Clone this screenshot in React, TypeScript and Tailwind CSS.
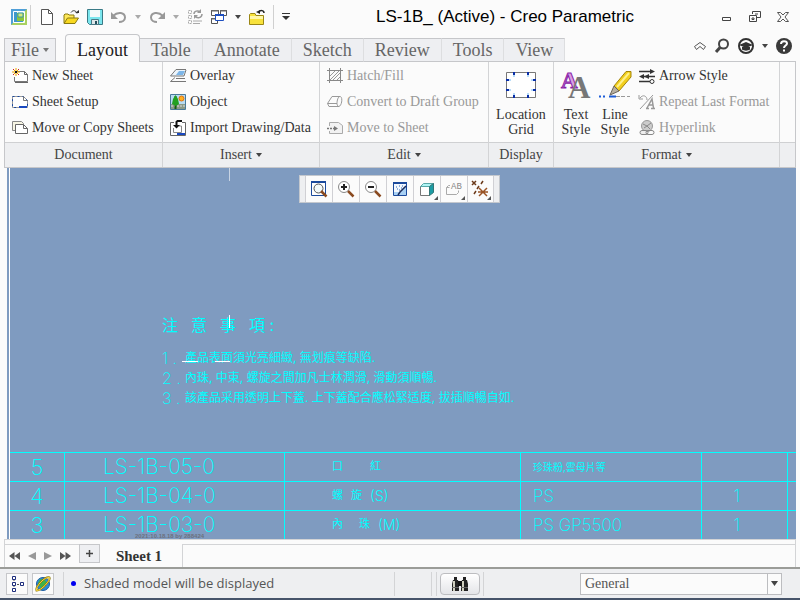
import type { ReactNode } from "react";
import clsx from "clsx";

const tabs = ["Layout", "Table", "Annotate", "Sketch", "Review", "Tools", "View"];

const notes = [
    "產品表面須光亮細緻, 無划痕等缺陷.",
    "內珠, 中束, 螺旋之間加凡士林潤滑, 滑動須順暢.",
    "該產品采用透明上下蓋. 上下蓋配合應松緊适度, 拔插順暢自如.",
];

const parts = [
    { no: "5", code: "LS-1B-05-0", name: ["口", "紅"], gap: "gap-[27px]", suffix: "", material: "珍珠粉,雲母片等", qty: "" },
    { no: "4", code: "LS-1B-04-0", name: ["螺", "旋"], gap: "gap-2", suffix: "(S)", material: "PS", qty: "1" },
    { no: "3", code: "LS-1B-03-0", name: ["內", "珠"], gap: "gap-4", suffix: "(M)", material: "PS GP5500", qty: "1" },
];

function Icon({ w = 16, h = 16, children }: { w?: number; h?: number; children: ReactNode }) {
    return (
        <svg width={w} height={h} viewBox={`0 0 ${w} ${h}`} fill="none" className="shrink-0 overflow-visible" aria-hidden="true">
            {children}
        </svg>
    );
}

function Caret({ color = "#444" }: { color?: string }) {
    return (
        <Icon w={6} h={4}>
            <path d="M0 0h6L3 4z" fill={color} />
        </Icon>
    );
}

/* Quick access icons */

const AppIcon = () => (
    <Icon>
        <path d="M0 0h16v16H0z" fill="#4f9fd8" />
        <path d="M0 16L16 0v16z" fill="#a8d060" />
        <path d="M2.500 2.500h11v11h-11z" fill="#d8f0e8" stroke="#fff" />
        <path d="M3 3h3v7h6v3H3z" fill="#3f97cc" />
        <path d="M6 4h7v8H6z" fill="#8cc63c" />
        <path d="M7 4h5v4H7z" fill="#d4ec7c" stroke="#3c96a8" />
    </Icon>
);

const NewIcon = () => (
    <Icon>
        <path d="M2.500.5h7l4 4v11h-11z" fill="#fff" stroke="#555" />
        <path d="M9.500.5v4h4" stroke="#555" />
    </Icon>
);

const OpenIcon = () => (
    <Icon>
        <path d="M1 14V6l1-1h3l1 1h5v3" fill="#ffe95a" stroke="#8a7a10" />
        <path d="M1 14.500L4.500 9h11L12 14.500z" fill="#f8d820" stroke="#8a7a10" />
        <path d="M8 3.500c2-3 5-2 6 1" stroke="#333" />
        <path d="M12 4h4v-3z" fill="#333" />
    </Icon>
);

const SaveIcon = () => (
    <Icon>
        <path d="M.5.5h15v15H2.500l-2-2z" fill="#7be6ee" stroke="#3a7a86" />
        <path d="M3 1h10v7H3z" fill="#f4fafa" />
        <path d="M4.500 10.500h7v5h-7z" fill="#e0e8ea" stroke="#4a7a86" />
        <path d="M8 12h2v3H8z" fill="#24505c" />
    </Icon>
);

const UndoIcon = () => (
    <Icon>
        <path d="M2 7C7 2 14 3.500 14 8.500c0 3-3 4.500-6 4.500" stroke="#999" strokeWidth="2" />
        <path d="M0 3v7h7z" fill="#999" />
    </Icon>
);

const RedoIcon = () => (
    <Icon>
        <path d="M14 7C9 2 2 3.500 2 8.500c0 3 3 4.500 6 4.500" stroke="#999" strokeWidth="2" />
        <path d="M16 3v7H9z" fill="#999" />
    </Icon>
);

const RegenerateIcon = () => (
    <Icon>
        <path d="M1.500 1.500h3v3h-3zM1.500 6.500h3v3h-3zM1.500 11.500h3v3h-3z" stroke="#aaa" strokeDasharray="2 1" />
        <path d="M6 12h9M6 14.500h7" stroke="#aaa" />
        <path d="M7 5c0-3 4-4 6-2M15 5c0 4-5 5-7 2" stroke="#999" strokeWidth="1.500" />
        <path d="M14 0v4h-4zM7 10V6h4z" fill="#999" />
    </Icon>
);

const WindowsIcon = () => (
    <Icon>
        <path d="M.5 1.500h7v5h-7zM9.500 1.500h6v5h-6zM.5 9.500h6v5h-6z" fill="#fff" stroke="#555" />
        <path d="M0 1h8v1.500H0zM9 1h7v1.500H9zM0 9h7v1.500H0z" fill="#666" />
        <path d="M4.500 5.500h8v6h-8z" fill="#fff" stroke="#1d4fc0" />
        <path d="M4 5h9v2H4z" fill="#1d4fc0" />
    </Icon>
);

const FolderIcon = () => (
    <Icon>
        <path d="M.5 15.500V5.500l1-1H6l1 2h7.500v9z" fill="#f8e23c" stroke="#9a8616" />
        <path d="M1 7h13v3H1z" fill="#fff7a8" />
        <path d="M15 4c0-3-4-3-5-1" stroke="#222" strokeWidth="1.500" />
        <path d="M7 3l4-2v4z" fill="#222" />
    </Icon>
);

/* Ribbon icons */

const NewSheetIcon = () => (
    <Icon>
        <path d="M5 3.500h7.500l3 3v7H2.500V9" fill="#fff" stroke="#777" />
        <path d="M12.500 3.500v3h3M3 14.500h13" stroke="#666" />
        <path d="M4 0v8M0 4h8M1 1l6 6M7 1L1 7" stroke="#f0a800" />
        <path d="M3 3h2v2H3z" fill="#111" />
        <path d="M1 1h1v1H1zM6 1h1v1H6zM1 6h1v1H1zM6 6h1v1H6z" fill="#d02020" />
    </Icon>
);

const SheetSetupIcon = () => (
    <Icon>
        <path d="M.5 2.500h11l4 4v7H.5z" fill="#fff" stroke="#999" />
        <path d="M.5 2.500h11l4 4v7H.5z" stroke="#1848a0" strokeDasharray="2 3" />
        <path d="M7 12h8v2H7z" fill="#1848c0" />
        <path d="M11.500 2.500v4h4" stroke="#777" />
    </Icon>
);

const CopySheetsIcon = () => (
    <Icon>
        <path d="M.5 1.500h9l2 2v7H.5z" fill="#f7f5e4" stroke="#888" />
        <path d="M3.500 4.500h8l4 4v5h-12z" fill="#fff" stroke="#666" />
        <path d="M11.500 4.500v4h4" stroke="#666" />
    </Icon>
);

const OverlayIcon = () => (
    <Icon>
        <path d="M6 1.500h10M6 1.500L.5 8H14l2-6" fill="#eef5fb" stroke="#777" />
        <path d="M9 3h6l-2 4H6z" fill="#7db6e8" />
        <path d="M5 9.500L.5 13.500H16M6 10.500h9" stroke="#777" />
    </Icon>
);

const ObjectIcon = () => (
    <Icon>
        <path d="M.5.5h15v15H.5z" fill="#b8dcf4" stroke="#4a7a9a" />
        <path d="M1 10h14v5H1z" fill="#8a9a88" />
        <path d="M1 12h14" stroke="#ddd" strokeDasharray="2 1" />
        <path d="M5.500 2v13" stroke="#145c14" strokeWidth="2" />
        <path d="M5.500 1L8 5l1 5-3 2-4-2 1-5z" fill="#22a022" />
        <circle cx="11.500" cy="4.500" r="2.500" fill="#ffb020" stroke="#e07010" />
    </Icon>
);

const ImportIcon = () => (
    <Icon>
        <path d="M4 2.500H.5v13h15v-13H12" fill="#fff" stroke="#666" />
        <path d="M3.500 8v4.500h8V6H9" stroke="#888" />
        <path d="M12 1H7.500L6.500 2v4" stroke="#111" strokeWidth="2" />
        <path d="M3 5h7L6.500 8.500z" fill="#111" />
        <path d="M7 13h8v2H7z" fill="#1848c0" />
    </Icon>
);

const HatchIcon = () => (
    <Icon>
        <path d="M0 2.500h16M0 12.500h16M2.500 0v15M13.500 0v15" stroke="#888" />
        <path d="M3 8l5-5M3 12l9-9M6 12l7-7M10 12l3-3" stroke="#999" />
    </Icon>
);

const ConvertIcon = () => (
    <Icon>
        <path d="M5 2.500h8c3 0 2 9-1 10H2L.5 9.500z" stroke="#999" />
        <path d="M.5 9.500H10c0-3 1-7 3-7M10 9.500c0 2 1 3 2 3" stroke="#999" />
    </Icon>
);

const MoveSheetIcon = () => (
    <Icon>
        <path d="M2.500 6V2.500h9l4 3v8h-13V11" fill="#f2f2f2" stroke="#aaa" />
        <path d="M0 8.500h8" stroke="#777" strokeDasharray="2 1" strokeWidth="1.500" />
        <path d="M7 6l4 2.500L7 11z" fill="#777" />
    </Icon>
);

const LocationGridIcon = () => (
    <Icon w={32} h={28}>
        <path d="M1.500 1.500h29v25h-29z" fill="#fff" stroke="#777" />
        <path
            d="M8 1h2v3H8zM22 1h2v3h-2zM8 24h2v3H8zM22 24h2v3h-2zM1 8h3v2H1zM1 18h3v2H1zM28 8h3v2h-3zM28 18h3v2h-3z"
            fill="#0a2ea8"
        />
        <path d="M4 8h2v2H4zM4 18h2v2H4zM26 8h2v2h-2zM26 18h2v2h-2zM8 4h2v2H8zM22 4h2v2h-2zM8 22h2v2H8zM22 22h2v2h-2z" fill="#b8dcf8" />
    </Icon>
);

const TextStyleIcon = () => (
    <Icon w={30} h={28}>
        <g fontFamily="Liberation Serif" fontWeight="bold">
            <text x="0" y="17" fontSize="23" fill="#d8a0e4" stroke="#8a1fa8">A</text>
            <text x="7" y="27" fontSize="31" fill="#777">A</text>
        </g>
    </Icon>
);

const LineStyleIcon = () => (
    <Icon w={32} h={28}>
        <path d="M0 25.500h2M4 25.500h2M10 25.500h7" stroke="#1c5cd8" strokeWidth="2" />
        <path d="M17 25.500h4M22 25.500h4M28 25.500h3" stroke="#999" />
        <path d="M15 15L27 .5h5V6L20 20z" fill="#f2cf1c" stroke="#a48408" />
        <path d="M18 16L30 2" stroke="#fff08a" strokeWidth="2" />
        <path d="M15 15l5 5-9 4z" fill="#b8b0a0" stroke="#6a6458" />
    </Icon>
);

const ArrowStyleIcon = () => (
    <Icon>
        <path d="M0 3.500h13M3 8.500h13M0 13.500h11" stroke="#333" strokeWidth="1.500" />
        <path d="M11 1l5 2.500L11 6zM0 8.500L5 6v5zM5 8.500L10 6v5z" fill="#333" />
        <circle cx="13" cy="13.500" r="2" fill="#fff" stroke="#333" />
    </Icon>
);

const RepeatIcon = () => (
    <Icon>
        <path d="M1 4c3-4 7-2 7 2M0 1v4h4M14 1L1 15" stroke="#999" />
        <path d="M7 14.500h3M12 14.500h4M8 14l5-9 1.500 9M10 11h4" stroke="#999" strokeWidth="1.500" />
    </Icon>
);

const HyperlinkIcon = () => (
    <Icon>
        <circle cx="8" cy="6" r="5.500" fill="#ccc" stroke="#999" />
        <path d="M4 4l4 2 4-3M5 8l3-2 3 3" stroke="#888" />
        <rect x="1" y="10.500" width="8" height="4" rx="2" fill="#eee" stroke="#888" />
        <rect x="7" y="10.500" width="8" height="4" rx="2" stroke="#888" />
    </Icon>
);

/* In-graphics toolbar icons */

const glassHandle = <path d="M11 11l5.500 5.500" stroke="#8a4a20" strokeWidth="2.500" />;

const RefitIcon = () => (
    <Icon w={18} h={18}>
        <path d="M1.500 1.500h14v14h-14z" fill="#fff" stroke="#1c4a9c" />
        <path d="M1 1h15v2H1z" fill="#1c4a9c" />
        <circle cx="8.500" cy="8.500" r="4.500" fill="#f4fafa" stroke="#555" />
        {glassHandle}
    </Icon>
);

const ZoomIcon = ({ plus = false }: { plus?: boolean }) => (
    <Icon w={18} h={18}>
        <circle cx="7" cy="7" r="5.500" fill="#fff" stroke="#888" />
        <path d={plus ? "M4 7h6M7 4v6" : "M4 7h6"} stroke="#222" strokeWidth="2" />
        {glassHandle}
    </Icon>
);

const RepaintIcon = () => (
    <Icon w={18} h={18}>
        <path d="M2.500 2.500h13v13h-13z" fill="#f4f9ff" stroke="#1c4a9c" />
        <path d="M2 2h14v2H2z" fill="#1c4a9c" />
        <path d="M3 15v-3l6 0 6-6v9z" fill="#a8d0f4" />
        <path d="M7 15l2-3 6-6" stroke="#1c2c5c" strokeWidth="1.500" />
        <path d="M5 7h1M8 6h1M6 9h1M10 8h1M8 10h1M11 6h1" stroke="#2c66b8" />
    </Icon>
);

const ShadingIcon = () => (
    <Icon w={18} h={18}>
        <path d="M2.500 6.500h9v9h-9z" fill="#fff" stroke="#777" />
        <path d="M2.500 6.500l3-3h10l-4 3z" fill="#aef4f4" stroke="#58a8a8" />
        <path d="M11.500 6.500l4-3v9l-4 3z" fill="#1c9ca4" stroke="#377" />
    </Icon>
);

const AnnotationIcon = () => (
    <Icon w={18} h={18}>
        <path d="M5 5.500H3.500l-2 2v7h10l2-2v-2M1.500 7.500h3" stroke="#aaa" />
        <text x="6" y="9" fontFamily="Liberation Mono" fontSize="9" fill="#888">AB</text>
    </Icon>
);

const DatumIcon = () => (
    <Icon w={18} h={18}>
        <path d="M1 1l4 4M5 1L1 5M12 1l-2 3M8 6l-2 3M5 11l-2 3" stroke="#6b3a1a" strokeWidth="1.500" />
        <path d="M8 8l8 8M16 8l-8 8M7 12h10" stroke="#9a5426" strokeWidth="1.500" />
    </Icon>
);

/* Pieces of the ribbon */

type CommandProps = { icon: ReactNode; label: string; disabled?: boolean };

function Command({ icon, label, disabled }: CommandProps) {
    return (
        <button
            type="button"
            disabled={disabled}
            className={clsx(
                "flex h-[26px] items-center gap-1 whitespace-nowrap text-left text-sm",
                disabled ? "text-[#999]" : "text-[#333]"
            )}
        >
            {icon}
            {label}
        </button>
    );
}

function BigCommand({ icon, top, bottom }: { icon: ReactNode; top: string; bottom: string }) {
    return (
        <button type="button" className="flex flex-col items-center gap-2 pt-2 text-sm leading-[15px] text-[#333]">
            {icon}
            <span>
                {top}
                <br />
                {bottom}
            </span>
        </button>
    );
}

type GroupProps = { title?: string; menu?: boolean; className?: string; children?: ReactNode };

function Group({ title, menu, className, children }: GroupProps) {
    return (
        <section className={clsx("flex flex-col border-r border-[#d3d4d6]", className)}>
            <div className="flex h-20 pt-px">{children}</div>
            <div className="flex h-[25px] items-center justify-center gap-1 border-t border-[#cfd0d2] bg-[#eeeff1] text-sm text-[#444]">
                {title}
                {menu && <Caret />}
            </div>
        </section>
    );
}

function QuickAccess() {
    return (
        <div className="flex items-center gap-2 pl-[11px]">
            <span className="border-r border-[#d0d0d0] py-1 pr-[3px]">
                <AppIcon />
            </span>
            <button type="button" aria-label="New"><NewIcon /></button>
            <button type="button" aria-label="Open"><OpenIcon /></button>
            <button type="button" aria-label="Save"><SaveIcon /></button>
            <button type="button" aria-label="Undo"><UndoIcon /></button>
            <button type="button" aria-label="Undo list"><Caret color="#aaa" /></button>
            <button type="button" aria-label="Redo"><RedoIcon /></button>
            <button type="button" aria-label="Redo list"><Caret color="#aaa" /></button>
            <button type="button" aria-label="Regenerate"><RegenerateIcon /></button>
            <button type="button" aria-label="Windows"><WindowsIcon /></button>
            <button type="button" aria-label="Window list"><Caret /></button>
            <button type="button" aria-label="Working directory"><FolderIcon /></button>
            <button type="button" aria-label="Customize" className="border-l border-[#d0d0d0] py-2 pl-2">
                <Icon w={8} h={8}>
                    <path d="M0 .5h8" stroke="#333" />
                    <path d="M0 3h8L4 7z" fill="#333" />
                </Icon>
            </button>
        </div>
    );
}

function TitleBar() {
    return (
        <header className="flex h-[34px] items-center">
            <QuickAccess />
            <h1 className="flex-1 text-center font-['Liberation_Sans'] text-[17px] text-black">
                LS-1B_ (Active) - Creo Parametric
            </h1>
            <div className="flex items-center gap-[14px] pr-[10px]">
                <button type="button" aria-label="Minimize">
                    <Icon w={14} h={14}><path d="M2.500 7.500h8v3h-8z" stroke="#444" /></Icon>
                </button>
                <button type="button" aria-label="Restore">
                    <Icon w={14} h={14}>
                        <path d="M4.500 4V1.500h8v6H9" stroke="#444" />
                        <path d="M1.500 5.500h7v6h-7zM4 8h2v1.500H4zM7 4h3" stroke="#444" />
                    </Icon>
                </button>
                <button type="button" aria-label="Close">
                    <Icon w={14} h={14}>
                        <path d="M1.500 2.500h3L7 5l2.500-2.500h3L9 7l3.500 4.500h-3L7 9l-2.500 2.500h-3L5 7z" stroke="#555" />
                    </Icon>
                </button>
            </div>
        </header>
    );
}

function TabBar() {
    return (
        <div className="relative z-10 -mb-px flex h-7 items-end pl-1">
            <button
                type="button"
                className="mr-[9px] flex h-6 items-center gap-1 border border-[#c6c7ca] bg-[#eeeff2] px-[6px] text-lg text-[#666]"
            >
                File
                <Caret color="#777" />
            </button>
            <nav className="flex items-end" role="tablist">
                {tabs.map((tab, i) => (
                    <button
                        key={tab}
                        type="button"
                        role="tab"
                        aria-selected={i === 0}
                        className={clsx(
                            "px-[11px] text-lg",
                            i === 0
                                ? "h-7 rounded-t-sm border border-b-0 border-[#c6c7ca] bg-[#fbfbfb] pt-0.5 leading-6 text-[#222]"
                                : "h-6 border-y border-r border-[#c6c7ca] border-r-[#dddee0] bg-[#eeeff2] leading-[22px] text-[#666]"
                        )}
                    >
                        {tab}
                    </button>
                ))}
            </nav>
            <div className="ml-auto flex h-full items-center gap-2 pr-2 pb-1">
                <button type="button" aria-label="Collapse ribbon">
                    <Icon w={12} h={8}>
                        <path d="M.5 4.500L6 .5l5.500 4M2.500 7.500L6 4.500l3.500 3M.5 4.500l2 3M11.500 4.500l-2 3" stroke="#555" />
                    </Icon>
                </button>
                <button type="button" aria-label="Search">
                    <Icon>
                        <circle cx="9.500" cy="6" r="4.500" stroke="#444" strokeWidth="2" />
                        <path d="M6 9.500L2 14" stroke="#444" strokeWidth="3" />
                    </Icon>
                </button>
                <button type="button" aria-label="Learning">
                    <Icon>
                        <circle cx="8" cy="8" r="7" fill="#fff" stroke="#333" strokeWidth="2" />
                        <path d="M1 7l7-3 7 3-7 3z" fill="#333" />
                        <path d="M4 9v2.500c2 1.500 6 1.500 8 0V9" fill="#333" />
                    </Icon>
                </button>
                <button type="button" aria-label="Learning list"><Caret /></button>
                <button type="button" aria-label="Help">
                    <Icon>
                        <circle cx="8" cy="8" r="8" fill="#3a3a3a" />
                        <path d="M5 6c0-4 6-3.500 6-.5C11 7.500 8 7.500 8 10M8 11.500v2" stroke="#fff" strokeWidth="2" />
                    </Icon>
                </button>
            </div>
        </div>
    );
}

function Ribbon() {
    return (
        <div className="mx-1 flex border border-[#c6c7ca] bg-[#fbfbfb]">
            <Group title="Document" className="w-[158px]">
                <div className="flex flex-col pl-[7px]">
                    <Command icon={<NewSheetIcon />} label="New Sheet" />
                    <Command icon={<SheetSetupIcon />} label="Sheet Setup" />
                    <Command icon={<CopySheetsIcon />} label="Move or Copy Sheets" />
                </div>
            </Group>
            <Group title="Insert" menu className="w-[157px]">
                <div className="flex flex-col pl-[7px]">
                    <Command icon={<OverlayIcon />} label="Overlay" />
                    <Command icon={<ObjectIcon />} label="Object" />
                    <Command icon={<ImportIcon />} label="Import Drawing/Data" />
                </div>
            </Group>
            <Group title="Edit" menu className="w-[169px]">
                <div className="flex flex-col pl-[7px]">
                    <Command icon={<HatchIcon />} label="Hatch/Fill" disabled />
                    <Command icon={<ConvertIcon />} label="Convert to Draft Group" disabled />
                    <Command icon={<MoveSheetIcon />} label="Move to Sheet" disabled />
                </div>
            </Group>
            <Group title="Display" className="w-[65px]">
                <div className="flex flex-1 justify-center">
                    <BigCommand icon={<LocationGridIcon />} top="Location" bottom="Grid" />
                </div>
            </Group>
            <Group title="Format" menu className="w-[226px]">
                <div className="flex gap-2 pl-[7px]">
                    <BigCommand icon={<TextStyleIcon />} top="Text" bottom="Style" />
                    <BigCommand icon={<LineStyleIcon />} top="Line" bottom="Style" />
                    <div className="flex flex-col">
                        <Command icon={<ArrowStyleIcon />} label="Arrow Style" />
                        <Command icon={<RepeatIcon />} label="Repeat Last Format" disabled />
                        <Command icon={<HyperlinkIcon />} label="Hyperlink" disabled />
                    </div>
                </div>
            </Group>
            <Group className="flex-1 border-r-0" />
        </div>
    );
}

const viewTools = [
    { label: "Refit", icon: <RefitIcon /> },
    { label: "Zoom in", icon: <ZoomIcon plus /> },
    { label: "Zoom out", icon: <ZoomIcon /> },
    { label: "Repaint", icon: <RepaintIcon /> },
    { label: "Display style", icon: <ShadingIcon />, menu: true },
    { label: "Annotation display", icon: <AnnotationIcon />, menu: true },
    { label: "Datum display", icon: <DatumIcon />, menu: true },
];

function ViewToolbar() {
    return (
        <div className="flex h-7 border border-[#c4c8ce] bg-[#eeeff1] px-[5px]">
            {viewTools.map((tool) => (
                <button
                    key={tool.label}
                    type="button"
                    aria-label={tool.label}
                    className="relative flex w-[27px] items-center justify-center border-l border-[#d0d0d4] bg-[#fbfbfb] last:border-r"
                >
                    {tool.icon}
                    {tool.menu && (
                        <span className="absolute right-0.5 bottom-0.5">
                            <Icon w={4} h={4}><path d="M4 0v4H0z" fill="#555" /></Icon>
                        </span>
                    )}
                </button>
            ))}
        </div>
    );
}

function PartsTable() {
    return (
        <table className="w-full table-fixed border-separate border-spacing-0 whitespace-nowrap">
            <colgroup>
                <col className="w-[7%]" />
                <col className="w-[28%]" />
                <col className="w-[30%]" />
                <col className="w-[23%]" />
                <col className="w-[11%]" />
                <col />
            </colgroup>
            <tbody>
                {parts.map((part) => (
                    <tr
                        key={part.no}
                        className="h-[29px] [&>td]:border-t [&>td]:border-r [&>td]:border-[#00ffff] [&>td]:p-0 [&>td]:leading-7 [&>td:last-child]:border-r-0"
                    >
                        <td className="text-center text-[22px]">{part.no}</td>
                        <td className="text-[21px]"><span className="pl-[38px]">{part.code}</span></td>
                        <td>
                            <div className="flex items-center gap-2 pl-[47px] text-sm font-light">
                                <span className={clsx("flex text-[11px] font-normal", part.gap)}>
                                    <span>{part.name[0]}</span>
                                    <span>{part.name[1]}</span>
                                </span>
                                {part.suffix}
                            </div>
                        </td>
                        <td className={/^[A-Z]/.test(part.material) ? "text-[17px]" : "text-[10px] font-normal"}>
                            <span className="pl-3">{part.material}</span>
                        </td>
                        <td className="text-[17px]"><span className="pl-8">{part.qty}</span></td>
                        <td />
                    </tr>
                ))}
            </tbody>
        </table>
    );
}

function DrawingArea() {
    return (
        <main className="mr-1 ml-[7px] flex min-h-0 flex-1 flex-col overflow-hidden bg-[#7f9bc0] pl-0.5">
            <div className="relative flex min-h-0 flex-1 flex-col border-l border-white font-['Inter','Noto_Sans_CJK_TC',sans-serif] font-extralight text-[#00ffff]">
                <div className="flex justify-center pt-[7px] pr-2">
                    <ViewToolbar />
                </div>
                {/* sheet frame and axis ticks */}
                <span className="absolute top-0 left-[219px] h-[13px] w-px bg-[#c8d4e4]" />
                <span className="absolute top-[147px] left-[219px] h-[13px] w-px bg-white" />
                <span className="absolute top-[193px] left-[172px] h-px w-4 bg-white" />
                <span className="absolute top-[193px] left-[205px] h-px w-[15px] bg-white" />

                <div className="mt-auto pb-11 pl-[152px]">
                    <h2 className="flex gap-[13px] text-base leading-6 font-normal">
                        <span>注</span>
                        <span>意</span>
                        <span>事</span>
                        <span>項 :</span>
                    </h2>
                    <ol className="mt-[11px]">
                        {notes.map((note, i) => (
                            <li key={note} className="flex h-5 items-center">
                                <span className="w-[23px] text-base">{i + 1} .</span>
                                <span className="text-xs font-normal whitespace-nowrap">{note}</span>
                            </li>
                        ))}
                    </ol>
                </div>

                <PartsTable />
                <span className="absolute bottom-0 left-[125px] font-['Liberation_Sans'] text-[6px] leading-[6px] font-bold text-[#6c717e]">
                    2021:10.18.18 by 288424
                </span>
            </div>
        </main>
    );
}

function SheetBar() {
    return (
        <div className="mx-1 border border-b-0 border-[#d3d4d6] pt-1">
            <div className="flex h-[23px] text-[#555]">
                <div className="flex w-[74px] items-center justify-between border-t border-[#d3d4d6] pr-2 pl-1">
                    <button type="button" aria-label="First sheet">
                        <Icon w={11} h={8}><path d="M5.500 0v8L0 4zM11 0v8L5.500 4z" fill="#555" /></Icon>
                    </button>
                    <button type="button" aria-label="Previous sheet">
                        <Icon w={8} h={8}><path d="M8 0v8L0 4z" fill="#999" /></Icon>
                    </button>
                    <button type="button" aria-label="Next sheet">
                        <Icon w={8} h={8}><path d="M0 0v8l8-4z" fill="#999" /></Icon>
                    </button>
                    <button type="button" aria-label="Last sheet">
                        <Icon w={11} h={8}><path d="M0 0v8l5.500-4zM5.500 0v8L11 4z" fill="#555" /></Icon>
                    </button>
                </div>
                <button type="button" aria-label="Add sheet" className="flex h-[19px] w-[21px] items-center justify-center border border-[#c6c7ca] bg-[#eeeff2]">
                    <Icon w={7} h={7}><path d="M0 3.500h7M3.500 0v7" stroke="#444" strokeWidth="1.500" /></Icon>
                </button>
                <button type="button" className="w-[82px] pr-1 text-[15px] leading-5 font-bold text-[#333]">Sheet 1</button>
                <div className="flex-1 border-t border-l border-[#d3d4d6]" />
            </div>
        </div>
    );
}

function StatusBar() {
    return (
        <footer className="flex h-[33px] items-center border-t-2 border-b-2 border-t-[#9b9c98] border-b-[#46546a] bg-[#eeeff1] pr-[18px] pl-1.5">
            <button type="button" aria-label="Model tree" className="flex size-[22px] items-center justify-center border border-[#c6c7ca] bg-[#fbfbfb]">
                <Icon>
                    <path d="M5 3v11M5 8.500h6" stroke="#555" strokeDasharray="2 1" />
                    <path d="M3.500.5h3v3h-3zM3.500 6.500h3v3h-3zM3.500 12.500h3v3h-3zM11.500 6.500h3v3h-3z" fill="#fff" stroke="#1c2c7c" />
                </Icon>
            </button>
            <button type="button" aria-label="Browser" className="ml-1 flex size-[22px] items-center justify-center border border-[#c6c7ca] bg-[#fbfbfb]">
                <Icon>
                    <circle cx="8" cy="8" r="6.500" fill="#2c8cd8" stroke="#1c5ca0" />
                    <path d="M5 3l5 1 2 3-3 5-4-1-2-4z" fill="#3cb44a" />
                    <path d="M1.500 14.500C0 11 10 0 14.500 1.500 16 4 6 15 1.500 14.500z" stroke="#8a7a10" strokeWidth="2" />
                    <path d="M1.500 14.500C0 11 10 0 14.500 1.500 16 4 6 15 1.500 14.500z" stroke="#ffd83c" />
                </Icon>
            </button>
            <div className="ml-[9px] flex h-6 flex-1 items-center gap-2 border-x border-[#d3d4d6] pl-[7px] font-['Open_Sans'] text-[13px] text-[#555]">
                <span className="size-[5px] rounded-full bg-[#0000f0]" />
                Shaded model will be displayed
            </div>
            <span className="ml-9 h-6 w-[6px] border-x border-[#d3d4d6]" />
            <button type="button" aria-label="Find" className="mx-[3px] flex h-[22px] w-10 items-center justify-center rounded-sm border border-[#bcbdc0] bg-linear-to-b from-white to-[#e4e5e8]">
                <Icon w={18} h={16}>
                    <path d="M3 1h3v3H3zM12 1h3v3h-3z" fill="#222" />
                    <path d="M2 4h5l1 4v7H1V8zM11 4h5l1 4v7h-7V8z" fill="#222" />
                    <path d="M7 5h4v5H7z" fill="#111" />
                    <path d="M3 5v10M12 5v10" stroke="#d0d0c0" strokeWidth="2" />
                    <path d="M1 11.500h7M10 11.500h7" stroke="#666" />
                </Icon>
            </button>
            <span className="h-6 w-[97px] border-l border-[#d3d4d6]" />
            <div className="relative">
                <select
                    aria-label="Selection filter"
                    className="block h-[22px] w-[202px] appearance-none border border-[#bcbdc0] bg-[#fbfbfb] pl-1 text-sm text-[#555]"
                >
                    <option>General</option>
                </select>
                <span className="pointer-events-none absolute inset-y-0 right-0 flex w-[15px] items-center justify-center border border-[#bcbdc0]">
                    <Icon w={7} h={5}><path d="M0 0h7L3.500 5z" fill="#444" /></Icon>
                </span>
            </div>
        </footer>
    );
}

export default function App() {
    return (
        <div className="flex h-screen flex-col bg-[#fbfbfb] font-['Liberation_Serif',serif]">
            <TitleBar />
            <TabBar />
            <Ribbon />
            <DrawingArea />
            <SheetBar />
            <StatusBar />
        </div>
    );
}
